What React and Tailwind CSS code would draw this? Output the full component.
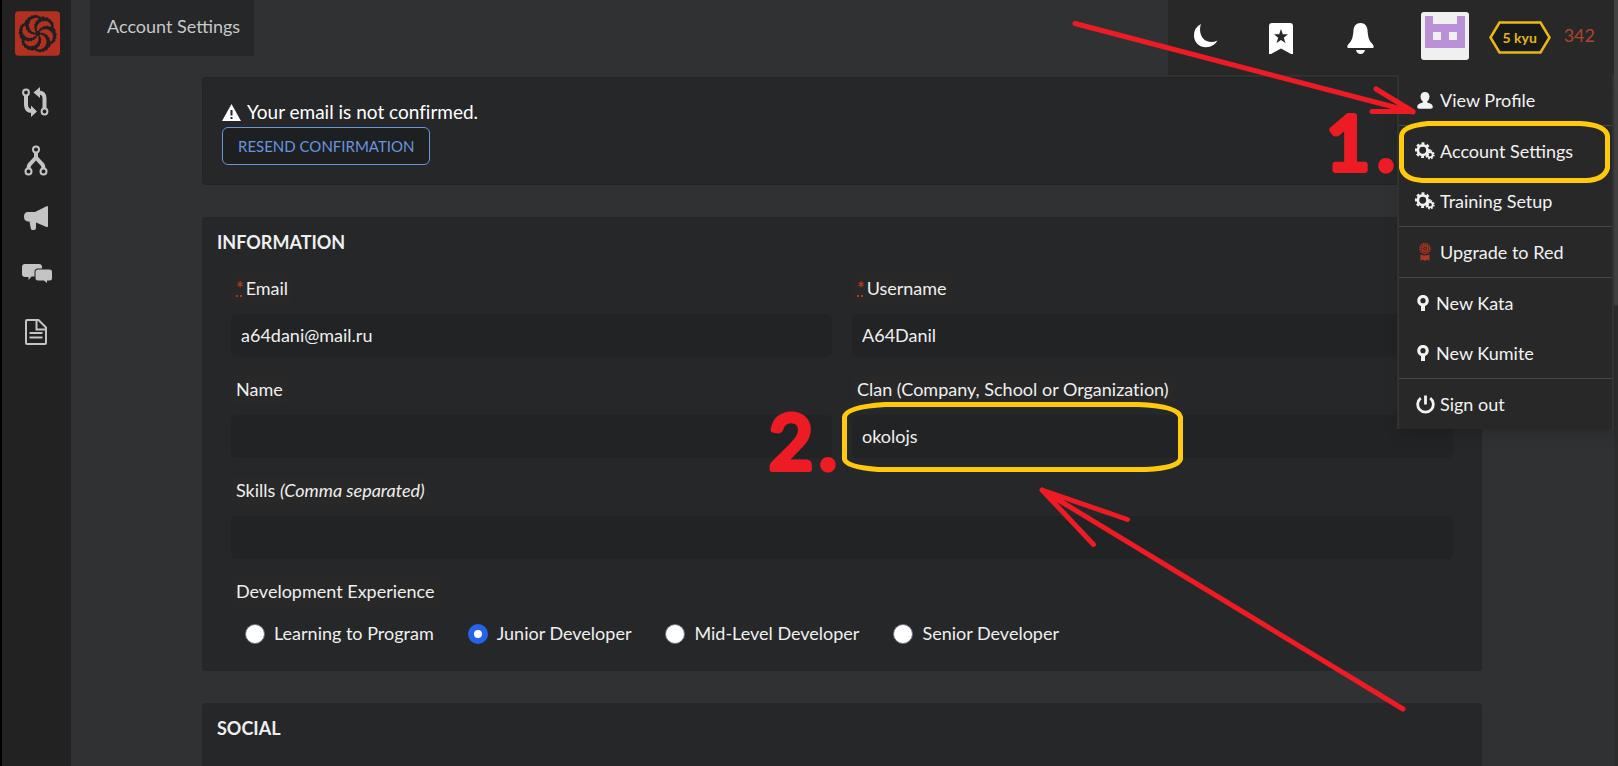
import React from "react";
import { SiCodewars } from "react-icons/si";

const stroke = { fill: "none", stroke: "currentColor" };

function CompareIcon() {
  return (
    <svg width="28" height="30" viewBox="0 0 28 30" {...stroke}>
      <circle cx="4" cy="5.5" r="2.9" strokeWidth="2" />
      <circle cx="22.5" cy="24.5" r="2.9" strokeWidth="2" />
      <path d="M4 9v8.500q0 6.500 6 6.500" strokeWidth="4" />
      <path d="M22.500 21v-9.500q0-6-6-6" strokeWidth="4" />
      <path d="M9 18.500v11.500l6-5.500z M18 0v11l-6.500-5.500z" fill="currentColor" stroke="none" />
    </svg>
  );
}

function ForkIcon() {
  return (
    <svg width="24" height="31" viewBox="0 0 24 31" {...stroke}>
      <circle cx="12" cy="4.500" r="3" strokeWidth="2" />
      <circle cx="4.500" cy="26.500" r="3" strokeWidth="2" />
      <circle cx="19.500" cy="26.500" r="3" strokeWidth="2" />
      <path d="M12 8v4.500l-6 6.500q-1.500 1.500-1.500 4.500 M12 12.500l6 6.500q1.500 1.500 1.500 4.500" strokeWidth="4" />
    </svg>
  );
}

function MegaphoneIcon() {
  return (
    <svg width="24" height="24" viewBox="0 0 24 24" fill="currentColor">
      <path d="M23 0q1 0 1 1v19q0 1.500-1.500 1L12 16.500V22q0 2-2 2H8.500Q7 24 6.800 22.500L5.500 15.500H4Q0 15 0 10.500T4 6h7z" />
    </svg>
  );
}

function ChatIcon() {
  return (
    <svg width="30" height="19" viewBox="0 0 30 19" fill="currentColor">
      <path d="M3 0h14q3 0 3 3v1.500h-4q-3.500 0-3.500 3.500v4.500H9.500L6.500 16v-3H3q-3 0-3-3V3q0-3 3-3z" />
      <path d="M16 5.500h11.500q2.500 0 2.500 2.500v6q0 2.500-2.500 2.500H25V19l-3-2.500h-6q-2.500 0-2.500-2.500V8q0-2.500 2.500-2.500z" />
    </svg>
  );
}

function DocIcon() {
  return (
    <svg width="22" height="26" viewBox="0 0 22 26" {...stroke} strokeWidth="2">
      <path d="M2 1h11.500L21 8.500V24q0 1-1 1H2q-1 0-1-1V2q0-1 1-1z M11.500 1v9.500H21" />
      <path d="M4.500 14h13 M4.500 18.500h13" />
    </svg>
  );
}

function PersonIcon() {
  return (
    <svg width="16" height="17" viewBox="0 0 16 17" fill="currentColor">
      <path d="M8 0c2.700 0 4.500 2 4.500 4.600 0 2.200-1 3.800-2.300 5v1c3.300.8 5.600 2 5.600 4.400 0 1.200-.8 1.700-2 1.700H2.200C1 16.700.2 16.200.2 15c0-2.400 2.300-3.600 5.600-4.400v-1c-1.300-1.200-2.300-2.800-2.300-5C3.500 2 5.300 0 8 0z" />
    </svg>
  );
}

function GearsIcon() {
  return (
    <svg width="20" height="18" viewBox="0 0 20 18" {...stroke}>
      <circle cx="7.700" cy="8.200" r="4.800" strokeWidth="2.700" />
      <circle cx="7.700" cy="8.200" r="6.800" strokeWidth="2.200" strokeDasharray="2.900 2.440" strokeDashoffset="1.400" />
      <circle cx="15" cy="12.700" r="2.600" strokeWidth="1.600" />
      <circle cx="15" cy="12.700" r="3.900" strokeWidth="1.600" strokeDasharray="1.700 1.363" />
    </svg>
  );
}

function RosetteIcon() {
  return (
    <svg width="12" height="18" viewBox="0 0 12 18" className="text-[#b1361e]" {...stroke}>
      <circle cx="6" cy="5.500" r="4.900" strokeWidth="1.500" strokeDasharray="1.800 .4" />
      <circle cx="6" cy="5.500" r="2.700" strokeWidth="1.500" />
      <circle cx="6" cy="5.500" r=".9" fill="currentColor" stroke="none" />
      <path d="M1.500 11.500q4.500 2 9 0V18l-2.200-1.500L6 18l-2.300-1.500L1.500 18z" fill="currentColor" stroke="none" />
    </svg>
  );
}

function PinIcon() {
  return (
    <svg width="12" height="16" viewBox="0 0 12 16" {...stroke}>
      <circle cx="6" cy="5.700" r="4.200" strokeWidth="3.200" />
      <path d="M6 10v6" strokeWidth="4" />
    </svg>
  );
}

function PowerIcon() {
  return (
    <svg width="19" height="19" viewBox="0 0 19 19" {...stroke} strokeWidth="2.800">
      <path d="M4.800 3.200a7.800 7.800 0 1 0 9.400 0 M9.500 .5v9" />
    </svg>
  );
}

function Avatar() {
  return (
    <svg width="48" height="48" viewBox="0 0 48 48">
      <rect width="48" height="48" rx="3" fill="#f0f0f0" />
      <path d="M4 4h8v8h24V4h8v32H4z" fill="#ba91d8" />
      <path d="M12 20h8v8h-8z M28 20h8v8h-8z" fill="#f0f0f0" />
    </svg>
  );
}

function Sidebar() {
  const items = [
    ["Kumite", CompareIcon, "mt-[31px] h-[30px]"],
    ["Forks", ForkIcon, "mt-[28px] h-[31px]"],
    ["Announcements", MegaphoneIcon, "mt-[30px] h-[24px]"],
    ["Discussions", ChatIcon, "mt-[34px] h-[19px] pl-[2px]"],
    ["Docs", DocIcon, "mt-[36px] h-[26px]"],
  ];
  return (
    <nav className="flex w-[71px] shrink-0 flex-col items-center border-l-2 border-black bg-[#222222] pt-[11px] pr-[2px] text-[#c4c4c4]">
      <a href="#home" aria-label="Home" className="ml-1 flex h-[45px] w-[45px] items-center justify-center overflow-hidden rounded-sm bg-[#202020] text-[#b1301f]">
        <SiCodewars size={45} />
      </a>
      {items.map(([label, Icon, cls]) => (
        <a key={label} href={"#" + label} aria-label={label} className={"flex items-center " + cls}>
          <Icon />
        </a>
      ))}
    </nav>
  );
}

const menuGroups = [
  [["View Profile", PersonIcon, "w-5"]],
  [["Account Settings", GearsIcon, "w-5"], ["Training Setup", GearsIcon, "w-5"]],
  [["Upgrade to Red", RosetteIcon, "w-5"]],
  [["New Kata", PinIcon, "w-4"], ["New Kumite", PinIcon, "w-4"]],
  [["Sign out", PowerIcon, "w-5"]],
];

function UserMenu() {
  return (
    <ul className="absolute top-[75px] right-0 z-10 w-[217px] divide-y divide-[#454545] border-x-2 border-[#323232] bg-[#282828] text-lg text-[#f2f2f2] shadow-lg">
      {menuGroups.map((group, i) => (
        <li key={i}>
          {group.map(([label, Icon, w]) => (
            <a key={label} href={"#" + label} className="flex h-[50px] items-center gap-[5px] pl-4">
              <span className={"flex justify-center " + w}><Icon /></span>
              {label}
            </a>
          ))}
        </li>
      ))}
    </ul>
  );
}

function Header() {
  return (
    <header className="relative flex h-[77px] items-start justify-between pl-[19px]">
      <a href="#settings" className="flex h-14 items-center bg-[#262729] pr-[14px] pb-[5px] pl-[17px] text-lg text-[#c8c8c8]">
        Account Settings
      </a>
      <div className="flex h-[75px] items-start bg-[#282828] pr-[19px] pl-[26px] text-white">
        <button aria-label="Toggle theme" className="mt-6">
          <svg width="24" height="24" viewBox="0 0 24 24" fill="currentColor">
            <path d="M7 0C4.500 7 7 17.500 17 18q3.500 0 6.500-1.500Q20 23 12 23.300C4 23 0 17.500 0 11.500Q0 3.500 7 0z" />
          </svg>
        </button>
        <button aria-label="Saved kata" className="mt-[23px] ml-[51px]">
          <svg width="24" height="31" viewBox="0 0 24 31" fill="currentColor">
            <path fillRule="evenodd" d="M3 0h18q3 0 3 3v28h-2L12 25.500 2 31H0V3q0-3 3-3z M12 6l-1.800 5.300H5l4.200 3.400L7.500 20l4.500-3 4.500 3-1.700-5.300L19 11.300h-5.200z" />
          </svg>
        </button>
        <button aria-label="Notifications" className="mt-[23px] ml-[54px]">
          <svg width="27" height="31" viewBox="0 0 27 31" fill="currentColor">
            <path d="M13.500 0C18 0 20 3 20.500 7c.5 6 1 10 4.500 13.500 2 2 2.500 4.500 0 4.500H2c-2.500 0-2-2.500 0-4.500C5.500 17 6 13 6.500 7 7 3 9 0 13.500 0z M9 27h9q-1 4-4.500 4T9 27z" />
          </svg>
        </button>
        <a href="#profile" aria-label="Profile" className="mt-3 ml-[47px]"><Avatar /></a>
        <span className="relative mt-[21px] ml-5 flex h-[33px] w-[62px] items-center justify-center text-sm font-bold text-[#e7b416]">
          <svg className="absolute inset-0" width="62" height="33" viewBox="0 0 62 33">
            <path d="M10.500 1.500h41l9 15-9 15h-41l-9-15z" fill="#181a18" stroke="#ecb613" strokeWidth="2.500" />
          </svg>
          <span className="relative">5 kyu</span>
        </span>
        <span className="mt-[21px] ml-[13px] text-lg text-[#b1432f]">342</span>
      </div>
      <UserMenu />
    </header>
  );
}

function Field({ id, label, required, value = "", className = "" }) {
  return (
    <div className={"flex flex-col items-start " + className}>
      <label htmlFor={id} className="mb-[10px] flex h-[30px] items-center rounded bg-[#282828] px-[5px] pb-[2px]">
        {required && <abbr title="required" className="mr-[2px] font-bold text-[#b1361e] underline decoration-dotted">*</abbr>}
        {label}
      </label>
      <input id={id} defaultValue={value} className="h-[43px] w-full rounded-md bg-[#222325] px-[10px] pb-[2px] outline-none" />
    </div>
  );
}

function Experience() {
  const options = ["Learning to Program", "Junior Developer", "Mid-Level Developer", "Senior Developer"];
  return (
    <fieldset className="mt-[18px]">
      <legend className="flex h-[30px] items-center rounded bg-[#282828] px-[5px] pb-[2px]">Development Experience</legend>
      <div className="mt-[14px] flex gap-[34px] pl-[14px]">
        {options.map((o) => (
          <label key={o} className="flex h-6 items-center gap-[9px]">
            <input
              type="radio"
              name="experience"
              defaultChecked={o === "Junior Developer"}
              className="mt-px size-5 appearance-none rounded-full border border-[#6b7280] bg-white checked:border-[6px] checked:border-[#2563eb]"
            />
            {o}
          </label>
        ))}
      </div>
    </fieldset>
  );
}

function Annotations() {
  return (
    <svg className="pointer-events-none absolute top-0 left-0 z-20" width="1618" height="766" viewBox="0 0 1618 766" fill="none" strokeLinecap="round" strokeLinejoin="round">
      <g stroke="#ed1c24" strokeWidth="5">
        <path d="M1075 23.500L1413 112M1376 89L1413 111.500L1372 111.500" />
        <path d="M1403 709L1042 490L1127.500 519.500M1042 490L1093.500 544.500" />
      </g>
      <g stroke="#ffc90e" strokeWidth="5">
        <path d="M1428 123.500H1580Q1606 125 1607.500 136V168Q1604 180 1586 180.500H1422Q1404 179 1401.500 168V136Q1402 126 1428 123.500z" />
        <path d="M885 404.500H1138Q1178 406 1180.500 417V459Q1178 468 1146 469.500H878Q846 467 844.500 459V417Q846 407 885 404.500z" />
      </g>
      <g fill="#ed1c24" stroke="#ed1c24" strokeWidth="6" className="font-['Lato'] text-[76px]">
        <text y="170"><tspan x="1326">1</tspan><tspan x="1377">.</tspan></text>
        <text y="469"><tspan x="769">2</tspan><tspan x="819">.</tspan></text>
      </g>
    </svg>
  );
}

export default function App() {
  return (
    <div className="relative flex h-screen overflow-hidden bg-[#303133] font-['Lato',sans-serif] text-lg text-[#efefef]">
      <Sidebar />
      <div className="flex min-w-0 flex-1 flex-col">
        <Header />
        <main className="mx-auto flex w-full max-w-[1281px] flex-1 flex-col gap-8 pr-px [font-variant-ligatures:none]">
          <section className="rounded border border-[#222325] bg-[#262729] px-[19px] pt-5 pb-[19px]">
            <p className="mb-px flex h-7 items-center gap-[6px] text-[19px] text-white">
              <svg width="19" height="17" viewBox="0 0 19 17">
                <path d="M9.500 0L19 17H0z" fill="#fff" />
                <path d="M9.500 6v5.500M9.500 13v2" stroke="#262729" strokeWidth="2" />
              </svg>
              Your email is not confirmed.
            </p>
            <button className="flex h-[38px] items-center rounded-md border border-[#6795de] bg-[#1e1f21] px-[15px] pt-[2px] text-[15px] text-[#6795de]">
              RESEND CONFIRMATION
            </button>
          </section>
          <section className="rounded bg-[#262729] px-[29px] pb-[26px]">
            <h2 className="-ml-[14px] flex h-[57px] items-center pb-[7px] font-bold">INFORMATION</h2>
            <div className="grid grid-cols-2 gap-x-5 gap-y-[18px]">
              <Field id="email" label="Email" required value="a64dani@mail.ru" />
              <Field id="username" label="Username" required value="A64Danil" />
              <Field id="name" label="Name" />
              <Field id="clan" label="Clan (Company, School or Organization)" value="okolojs" />
              <Field id="skills" className="col-span-2" label={<>Skills&nbsp;<i>(Comma separated)</i></>} />
            </div>
            <Experience />
          </section>
          <section className="flex-1 rounded-t bg-[#262729] px-[15px]">
            <h2 className="flex h-[50px] items-center font-bold">SOCIAL</h2>
          </section>
        </main>
      </div>
      <div className="w-1 shrink-0 bg-[#2c2c2c]">
        <div className="h-2/5 rounded-b bg-[#424242]" />
      </div>
      <Annotations />
    </div>
  );
}
